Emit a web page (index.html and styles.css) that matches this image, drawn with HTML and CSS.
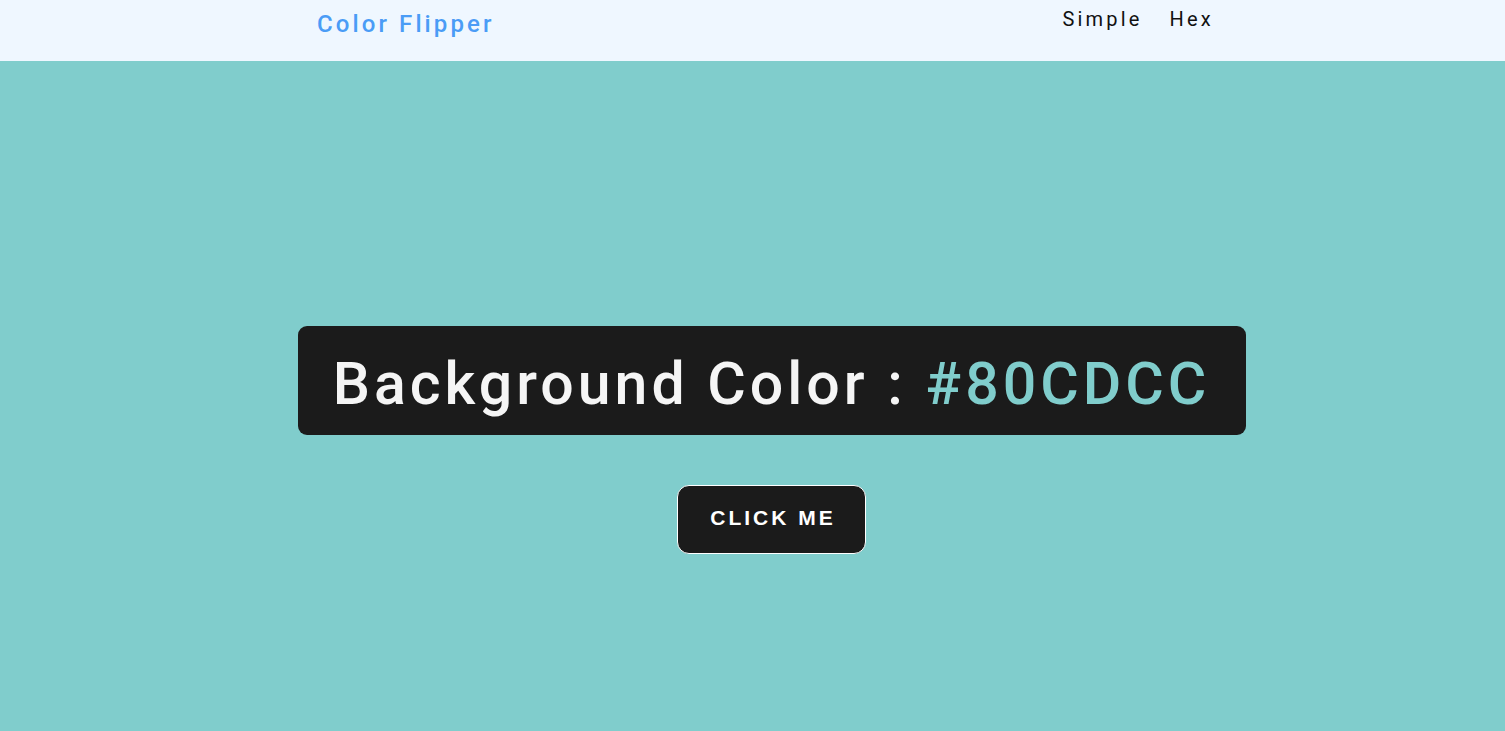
FILE: index.html
```html
<!DOCTYPE html>
<html lang="en">
<head>
<meta charset="utf-8">
<title>Color Flipper</title>
<link rel="stylesheet" href="styles.css">
</head>
<body>
<nav class="nav">
  <div class="nav-inner">
    <span class="brand">Color Flipper</span>
    <ul class="links">
      <li><a href="#">Simple</a></li>
      <li><a href="#">Hex</a></li>
    </ul>
  </div>
</nav>
<main class="main">
  <h2 class="heading">Background Color : <span class="color">#80CDCC</span></h2>
  <button class="btn">CLICK ME</button>
</main>
</body>
</html>
```
FILE: styles.css
```css
* { box-sizing: border-box; }
html, body { margin: 0; padding: 0; }
body {
  background: #80cdcc;
  font-family: Roboto, "Liberation Sans", sans-serif;
  min-height: 100vh;
}
.nav {
  height: 61px;
  background: #eff7ff;
}
.nav-inner {
  display: flex;
  justify-content: space-between;
  align-items: flex-start;
  padding-left: 317px;
  padding-right: 291px;
}
.brand {
  color: #4a9cf6;
  font-size: 24px;
  font-weight: 500;
  letter-spacing: 3.1px;
  margin-top: 10px;
}
.links {
  list-style: none;
  display: flex;
  gap: 27px;
  margin: 7px 0 0;
  padding: 0;
}
.links a {
  color: #111;
  text-decoration: none;
  font-size: 20px;
  letter-spacing: 3.2px;
}
.main {
  display: flex;
  flex-direction: column;
  align-items: center;
  padding-top: 265px;
  padding-left: 38px;
}
.heading {
  margin: 0;
  background: #1b1b1b;
  color: #f5f5f5;
  border-radius: 9px;
  width: 948px;
  height: 109px;
  display: flex;
  align-items: center;
  justify-content: center;
  padding-top: 6px;
  font-size: 59px;
  font-weight: 500;
  letter-spacing: 4px;
  white-space: pre;
}
.color { color: #80cdcc; }
.btn {
  margin-top: 50px;
  width: 189px;
  height: 69px;
  background: #1b1b1b;
  color: #fff;
  border: 1px solid #fff;
  border-radius: 12px;
  font-family: "Liberation Sans", Arial, sans-serif;
  font-weight: 700;
  font-size: 21px;
  letter-spacing: 3px;
  padding: 0 0 4px 3px;
}
```
